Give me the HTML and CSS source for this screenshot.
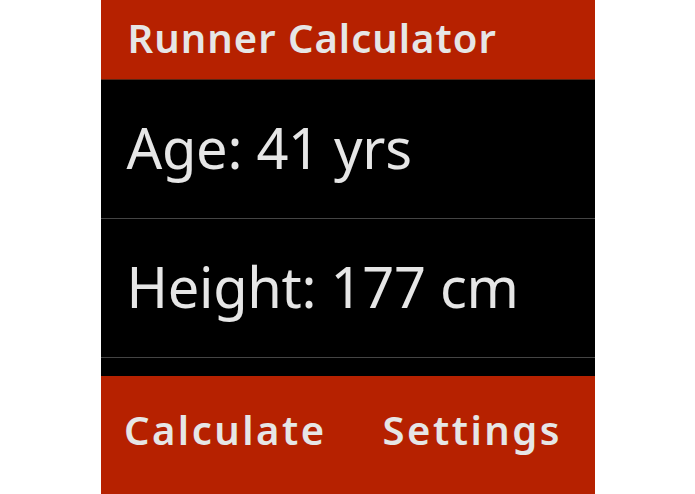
FILE: index.html
```html
<!DOCTYPE html>
<html lang="en">
<head>
<meta charset="utf-8">
<title>Runner Calculator</title>
<link rel="stylesheet" href="styles.css">
</head>
<body>
<div class="app">
  <header class="app-bar">Runner Calculator</header>
  <main class="list">
    <div class="list-item">Age: 41 yrs</div>
    <div class="list-item">Height: 177 cm</div>
  </main>
  <footer class="toolbar">
    <button class="tool-btn" type="button">Calculate</button>
    <button class="tool-btn" type="button">Settings</button>
  </footer>
</div>
</body>
</html>
```

FILE: styles.css
```css
html, body {
  margin: 0;
  padding: 0;
  background: #ffffff;
}

body {
  font-family: "Noto Sans", "Open Sans", sans-serif;
  color: #e6e6e6;
}

.app {
  width: 494px;
  height: 494px;
  margin: 0 auto;
  display: flex;
  flex-direction: column;
  background: #000000;
}

/* title bar */
.app-bar {
  height: 80px;
  box-sizing: border-box;
  border-bottom: 1px solid #5a2615;
  background: #b62100;
  padding: 0 0 4px 27px;
  display: flex;
  align-items: center;
  font-size: 40px;
  font-weight: 600;
  letter-spacing: 1px;
  line-height: 1;
}

/* value rows */
.list {
  flex: 1;
  display: flex;
  flex-direction: column;
}

.list-item {
  height: 139px;
  box-sizing: border-box;
  border-bottom: 1px solid #444444;
  display: flex;
  align-items: center;
  padding: 0 0 4px 26px;
  font-size: 56px;
  font-weight: 400;
  letter-spacing: -0.3px;
  line-height: 1;
}

/* bottom action buttons */
.toolbar {
  height: 118px;
  background: #b62100;
  display: flex;
}

.tool-btn {
  flex: 1;
  border: 0;
  background: transparent;
  color: #e6e6e6;
  font-family: inherit;
  font-size: 40px;
  font-weight: 600;
  letter-spacing: 2.5px;
  text-indent: 2.5px;
  padding: 0 0 12px;
  cursor: pointer;
}
```
